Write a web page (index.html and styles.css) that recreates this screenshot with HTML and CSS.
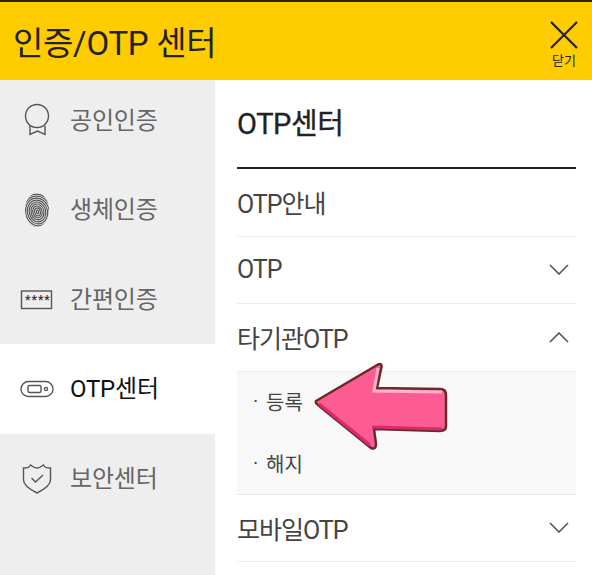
FILE: index.html
```html
<!DOCTYPE html>
<html lang="ko">
<head>
  <meta charset="UTF-8">
  <title>인증/OTP 센터</title>
  <link rel="stylesheet" href="styles.css">
</head>
<body>
  <div class="screen">
    <header class="top-bar">
      <h1 class="top-title">인증/OTP 센터</h1>
      <button class="close-btn" type="button">
        <svg class="close-icon" viewBox="0 0 28 28" width="28" height="28"><path d="M1 1 L27 27 M27 1 L1 27"/></svg>
        <span class="close-label">닫기</span>
      </button>
    </header>
    <div class="body-wrap">
      <nav class="side-menu">
        <a class="side-item first">
          <svg class="side-icon" viewBox="0 0 34 34" width="34" height="34">
            <circle cx="17" cy="13" r="11.5"/>
            <path d="M10 22.500 V31.500 L17.500 28 L25 31.500 V22.500"/>
          </svg>
          <span class="side-label">공인인증</span>
        </a>
        <a class="side-item">
          <svg class="side-icon" viewBox="0 0 34 34" width="34" height="34">
            <defs>
              <clipPath id="printClip"><ellipse cx="17" cy="17" rx="12" ry="17"/></clipPath>
            </defs>
            <g class="print" clip-path="url(#printClip)">
              <g transform="rotate(-14 17 17)">
                <ellipse cx="17" cy="19" rx="1" ry="2"/>
                <ellipse cx="17" cy="19" rx="2.800" ry="4"/>
                <ellipse cx="17" cy="19" rx="4.600" ry="6"/>
                <ellipse cx="17" cy="19" rx="6.400" ry="8"/>
                <ellipse cx="17" cy="19" rx="8.200" ry="10"/>
                <ellipse cx="17" cy="19" rx="10" ry="12"/>
                <ellipse cx="17" cy="19" rx="11.800" ry="14"/>
                <ellipse cx="17" cy="19" rx="13.600" ry="16"/>
                <ellipse cx="17" cy="19" rx="15.400" ry="18"/>
                <ellipse cx="17" cy="19" rx="17.200" ry="20"/>
                <ellipse cx="17" cy="19" rx="19" ry="22"/>
              </g>
            </g>
          </svg>
          <span class="side-label">생체인증</span>
        </a>
        <a class="side-item">
          <svg class="side-icon" viewBox="0 0 34 34" width="34" height="34">
            <rect x="1.500" y="9" width="30" height="17.500"/>
          </svg>
          <span class="stars">****</span>
          <span class="side-label">간편인증</span>
        </a>
        <a class="side-item active">
          <svg class="side-icon" viewBox="0 0 34 34" width="34" height="34">
            <rect x="1" y="9.500" width="32" height="15" rx="7.500"/>
            <rect x="8" y="13.500" width="13" height="7" rx="1.500"/>
            <circle cx="26" cy="17" r="1.600"/>
          </svg>
          <span class="side-label">OTP센터</span>
        </a>
        <a class="side-item">
          <svg class="side-icon" viewBox="0 0 34 34" width="34" height="34">
            <path d="M3.500 7 C8 7 9 6.500 10.500 4 C13 6 14.500 7 17 7 C19.500 7 21 6 23.500 4 C25 6.500 26 7 30.500 7 V19 C30.500 25 23 29 17 32 C11 29 3.500 25 3.500 19 Z"/>
            <path d="M11.500 17 L15.500 21 L23 14"/>
          </svg>
          <span class="side-label">보안센터</span>
        </a>
      </nav>
      <main class="content">
        <h2 class="content-title">OTP센터</h2>
        <div class="row"><span>OTP안내</span></div>
        <div class="row"><span>OTP</span>
          <svg class="chev" viewBox="0 0 20 11" width="20" height="11"><path d="M1 1 L10 10 L19 1"/></svg>
        </div>
        <div class="row"><span>타기관OTP</span>
          <svg class="chev" viewBox="0 0 20 11" width="20" height="11"><path d="M1 10 L10 1 L19 10"/></svg>
        </div>
        <div class="sub-list">
          <div class="sub-item"><span class="sub-dot">·</span>등록</div>
          <div class="sub-item"><span class="sub-dot">·</span>해지</div>
        </div>
        <div class="row"><span>모바일OTP</span>
          <svg class="chev" viewBox="0 0 20 11" width="20" height="11"><path d="M1 1 L10 10 L19 1"/></svg>
        </div>
      </main>
    </div>
    <svg class="pointer" viewBox="0 0 136 90" width="136" height="90">
      <path class="pointer-shape" d="M2 39 L64 2.500 Q68 1 67.500 5 L63 26 L126 27 Q132 27 132 33 V64 Q132 69 126 69 L60 67 L62 82 Q62 88 57 86 L4 43 Q1 41 2 39 Z"/>
      <path class="pointer-hi" d="M64 6 L60 29 L128 30"/>
      <path class="pointer-lo" d="M5 42 L56 83 M58 65 L128 67"/>
    </svg>
  </div>
</body>
</html>
```
FILE: styles.css
```css
html, body {
  margin: 0;
  padding: 0;
  background: #fff;
}
.screen {
  position: relative;
  width: 592px;
  height: 575px;
  overflow: hidden;
  font-family: Roboto, "Noto Sans CJK KR", sans-serif;
  color: #222;
  display: flex;
  flex-direction: column;
}
.top-bar {
  height: 78px;
  flex: none;
  border-top: 2px solid #2a2400;
  background: #fc0;
  display: flex;
  align-items: center;
  justify-content: space-between;
  padding: 0 14px 0 13px;
}
.top-title {
  margin: 0;
  font-size: 33px;
  font-weight: 400;
  letter-spacing: -0.3px;
  color: #222;
}
.close-btn {
  background: none;
  border: none;
  padding: 0;
  display: flex;
  flex-direction: column;
  align-items: center;
  gap: 4px;
  margin-top: 6px;
  color: #222;
  font-family: inherit;
}
.close-icon path {
  stroke: #222;
  stroke-width: 2.2;
  fill: none;
}
.close-label {
  font-size: 13px;
  line-height: 15px;
}
.body-wrap {
  flex: 1;
  display: flex;
  min-height: 0;
}
.side-menu {
  width: 215px;
  flex: none;
  background: #eee;
}
.side-item {
  position: relative;
  height: 89.5px;
  display: flex;
  align-items: center;
  gap: 16px;
  padding-left: 20px;
  box-sizing: border-box;
  font-size: 24px;
  letter-spacing: -0.2px;
  color: #666;
}
.side-item.first {
  height: 85px;
  padding-bottom: 5px;
}
.side-item.active {
  background: #fff;
  color: #111;
}
.side-label {
  margin-bottom: 4px;
}
.side-icon {
  flex: none;
}
.side-icon circle, .side-icon rect, .side-icon path {
  fill: none;
  stroke: #555;
  stroke-width: 1.4;
}
.print ellipse {
  fill: none;
  stroke: #555;
  stroke-width: 1.2;
}
.stars {
  position: absolute;
  left: 25px;
  top: 38px;
  font-size: 12px;
  line-height: 14px;
  font-weight: 700;
  letter-spacing: 1px;
  color: #333;
}
.content {
  flex: 1;
  padding: 0 16px 0 22px;
  min-width: 0;
}
.content-title {
  margin: 0;
  height: 89px;
  box-sizing: border-box;
  padding-top: 22px;
  font-size: 29px;
  line-height: 44px;
  font-weight: 400;
  letter-spacing: -0.4px;
  -webkit-text-stroke: 0.3px #222;
  color: #222;
  border-bottom: 2px solid #222;
}
.row {
  height: 67.5px;
  box-sizing: border-box;
  display: flex;
  align-items: center;
  justify-content: space-between;
  padding-right: 7px;
  font-size: 25px;
  letter-spacing: -1px;
  color: #444;
  border-bottom: 1px solid #eee;
}
.chev path {
  fill: none;
  stroke: #555;
  stroke-width: 1.6;
}
.sub-list {
  background: #f8f8f8;
  border-bottom: 1px solid #e6e6e6;
  padding: 0 0 0 16px;
}
.sub-item {
  height: 61px;
  display: flex;
  align-items: center;
  font-size: 20px;
  color: #444;
}
.sub-item:first-child {
  padding-bottom: 2px;
  box-sizing: border-box;
}
.sub-dot {
  width: 13px;
  flex: none;
}
.pointer {
  position: absolute;
  left: 314px;
  top: 362px;
}
.pointer-shape {
  fill: #fd5c92;
  stroke: #6b2a28;
  stroke-width: 2.5;
  stroke-linejoin: round;
}
.pointer-hi {
  fill: none;
  stroke: #ffb3cc;
  stroke-width: 3;
}
.pointer-lo {
  fill: none;
  stroke: #d92a6b;
  stroke-width: 3;
}
```
